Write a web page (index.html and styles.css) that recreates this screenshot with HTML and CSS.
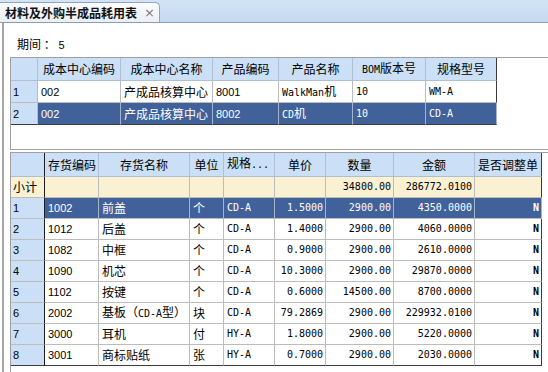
FILE: index.html
```html
<!DOCTYPE html>
<html lang="zh-CN">
<head>
    <meta charset="UTF-8">
    <meta name="viewport" content="width=device-width, initial-scale=1.0">
    <title>材料及外购半成品耗用表</title>
    <link rel="stylesheet" href="styles.css">
</head>
<body>
    <div class="tabbar">
        <div class="tab">
            <span class="tab-title">材料及外购半成品耗用表</span>
            <span class="tab-close">×</span>
        </div>
    </div>
    <div class="content">
        <div class="period">期间 ： <span class="code">5</span></div>

        <!-- 成本中心 / 产品 -->
        <div class="panel panel-top">
            <table class="grid grid-top">
                <colgroup>
                    <col class="w27"><col class="w83"><col class="w92"><col class="w66"><col class="w74"><col class="w73"><col class="w71">
                </colgroup>
                <tr class="head">
                    <th class="rh"></th>
                    <th>成本中心编码</th>
                    <th>成本中心名称</th>
                    <th>产品编码</th>
                    <th>产品名称</th>
                    <th><span class="mono">BOM</span>版本号</th>
                    <th class="last">规格型号</th>
                </tr>
                <tr>
                    <td class="rh code">1</td>
                    <td class="code">002</td>
                    <td>产成品核算中心</td>
                    <td class="code">8001</td>
                    <td><span class="mono">WalkMan</span>机</td>
                    <td class="mono">10</td>
                    <td class="mono last">WM-A</td>
                </tr>
                <tr class="sel bottom">
                    <td class="rh code">2</td>
                    <td class="code">002</td>
                    <td>产成品核算中心</td>
                    <td class="code">8002</td>
                    <td><span class="mono">CD</span>机</td>
                    <td class="mono">10</td>
                    <td class="mono last">CD-A</td>
                </tr>
            </table>
        </div>

        <!-- 存货明细 -->
        <div class="panel panel-bottom">
            <table class="grid grid-bottom">
                <colgroup>
                    <col class="w34"><col class="w54"><col class="w91"><col class="w34"><col class="w51"><col class="w51"><col class="w68"><col class="w81"><col class="w67">
                </colgroup>
                <tr class="head">
                    <th class="rh frozen"></th>
                    <th>存货编码</th>
                    <th>存货名称</th>
                    <th>单位</th>
                    <th class="trunc">规格<span class="mono">...</span></th>
                    <th>单价</th>
                    <th>数量</th>
                    <th>金额</th>
                    <th class="last">是否调整单</th>
                </tr>
                <tr class="subtotal">
                    <td class="rh frozen">小计</td>
                    <td></td><td></td><td></td><td></td><td></td>
                    <td class="mono num">34800.00</td>
                    <td class="mono num">286772.0100</td>
                    <td class="last"></td>
                </tr>
                <tr class="sel">
                    <td class="rh frozen code">1</td><td class="code">1002</td><td>前盖</td><td>个</td><td class="mono">CD-A</td>
                    <td class="mono num">1.5000</td><td class="mono num">2900.00</td><td class="mono num">4350.0000</td><td class="mono num flag last">N</td>
                </tr>
                <tr>
                    <td class="rh frozen code">2</td><td class="code">1012</td><td>后盖</td><td>个</td><td class="mono">CD-A</td>
                    <td class="mono num">1.4000</td><td class="mono num">2900.00</td><td class="mono num">4060.0000</td><td class="mono num flag last">N</td>
                </tr>
                <tr>
                    <td class="rh frozen code">3</td><td class="code">1082</td><td>中框</td><td>个</td><td class="mono">CD-A</td>
                    <td class="mono num">0.9000</td><td class="mono num">2900.00</td><td class="mono num">2610.0000</td><td class="mono num flag last">N</td>
                </tr>
                <tr>
                    <td class="rh frozen code">4</td><td class="code">1090</td><td>机芯</td><td>个</td><td class="mono">CD-A</td>
                    <td class="mono num">10.3000</td><td class="mono num">2900.00</td><td class="mono num">29870.0000</td><td class="mono num flag last">N</td>
                </tr>
                <tr>
                    <td class="rh frozen code">5</td><td class="code">1102</td><td>按键</td><td>个</td><td class="mono">CD-A</td>
                    <td class="mono num">0.6000</td><td class="mono num">14500.00</td><td class="mono num">8700.0000</td><td class="mono num flag last">N</td>
                </tr>
                <tr>
                    <td class="rh frozen code">6</td><td class="code">2002</td><td>基板（<span class="mono">CD-A</span>型）</td><td>块</td><td class="mono">CD-A</td>
                    <td class="mono num">79.2869</td><td class="mono num">2900.00</td><td class="mono num">229932.0100</td><td class="mono num flag last">N</td>
                </tr>
                <tr>
                    <td class="rh frozen code">7</td><td class="code">3000</td><td>耳机</td><td>付</td><td class="mono">HY-A</td>
                    <td class="mono num">1.8000</td><td class="mono num">2900.00</td><td class="mono num">5220.0000</td><td class="mono num flag last">N</td>
                </tr>
                <tr class="bottom">
                    <td class="rh frozen code">8</td><td class="code">3001</td><td>商标贴纸</td><td>张</td><td class="mono">HY-A</td>
                    <td class="mono num">0.7000</td><td class="mono num">2900.00</td><td class="mono num">2030.0000</td><td class="mono num flag last">N</td>
                </tr>
            </table>
        </div>
    </div>
</body>
</html>
```

FILE: styles.css
```css
body {
    margin: 0;
    width: 548px;
    height: 372px;
    overflow: hidden;
    background-color: #fff;
    color: #000;
    font-family: "Noto Sans CJK SC", sans-serif;
    font-size: 12px;
}

/* 顶部页签 */
.tabbar {
    height: 22px;
    background: linear-gradient(#d3e4f6, #c4d9f0);
    border-bottom: 1px solid #8d9db2;
    display: flex;
    align-items: flex-end;
}
.tab {
    width: 160px;
    height: 20px;
    box-sizing: border-box;
    display: flex;
    align-items: center;
    padding-left: 5px;
    background: linear-gradient(#fbfcfe, #eaeff5);
    border-top: 1px solid #8ea4c2;
    border-right: 1px solid #8ea4c2;
    border-radius: 0 5px 0 0;
}
.tab-title {
    font-weight: bold;
    line-height: 14px;
    color: #111;
}
.tab-close {
    margin-left: auto;
    margin-right: 4px;
    color: #7a7a7a;
    font-family: "DejaVu Sans", sans-serif;
    font-size: 13px;
    line-height: 14px;
}

.content {
    margin-left: 2px;
    height: 349px;
    border-left: 2px solid #a6a6a6;
}
.period {
    padding: 13px 0 0 13px;
    height: 16px;
    line-height: 16px;
    margin-bottom: 5px;
}

/* 表格面板 */
.panel {
    margin-left: 6px;
    border: 1px solid #a0a0a0;
    border-right: none;
    background-color: #fff;
}
.panel-top {
    height: 91px;
}
.panel-bottom {
    margin-top: 2px;
    height: 230px;
    border-bottom: none;
}

.grid {
    border-collapse: separate;
    border-spacing: 0;
    table-layout: fixed;
}
.grid-top { width: 486px; }
.grid-bottom { width: 531px; }

.w27 { width: 27px; }
.w34 { width: 34px; }
.w51 { width: 51px; }
.w54 { width: 54px; }
.w66 { width: 66px; }
.w67 { width: 67px; }
.w68 { width: 68px; }
.w71 { width: 71px; }
.w73 { width: 73px; }
.w74 { width: 74px; }
.w81 { width: 81px; }
.w83 { width: 83px; }
.w91 { width: 91px; }
.w92 { width: 92px; }

.grid th,
.grid td {
    box-sizing: border-box;
    padding: 0 3px;
    border-right: 1px solid #bcbcbc;
    border-bottom: 1px solid #bcbcbc;
    white-space: nowrap;
    overflow: hidden;
    text-align: left;
    vertical-align: middle;
    font-weight: normal;
    line-height: 14px;
}
.grid-top tr { height: 22px; }
.grid-top tr.head { height: 23px; }
.grid-bottom tr { height: 21px; }
.grid-bottom tr.head { height: 24px; }

.grid th {
    background-color: #cbe0f7;
    text-align: center;
    border-right-color: #aebfd2;
    border-bottom-color: #aebfd2;
}
.grid th.trunc {
    text-align: left;
    vertical-align: top;
    padding-top: 3px;
}
.grid .rh {
    background-color: #cbe0f7;
    padding-left: 2px;
}
.grid .sel td {
    background-color: #41619b;
    color: #fff;
    border-right-color: #a7b4c8;
}
.grid .sel td.rh {
    background-color: #cbe0f7;
    color: #000;
    border-right-color: #bcbcbc;
}
.grid .subtotal td {
    background-color: #f9f1d2;
}

/* 深色边线 */
.grid .last { border-right-color: #3c3c3c; }
.grid .bottom td { border-bottom-color: #3c3c3c; }
.grid .frozen { border-right-color: #1e1e1e; }
.grid .sel td.frozen { border-right-color: #1e1e1e; }

.code {
    font-family: "Liberation Sans", Arial, sans-serif;
    font-size: 11px;
}
.mono {
    font-family: "DejaVu Sans Mono", "Liberation Mono", monospace;
    font-size: 10px;
}
.grid .num {
    text-align: right;
    padding-right: 2px;
}
.grid .flag {
    font-weight: bold;
}
```
